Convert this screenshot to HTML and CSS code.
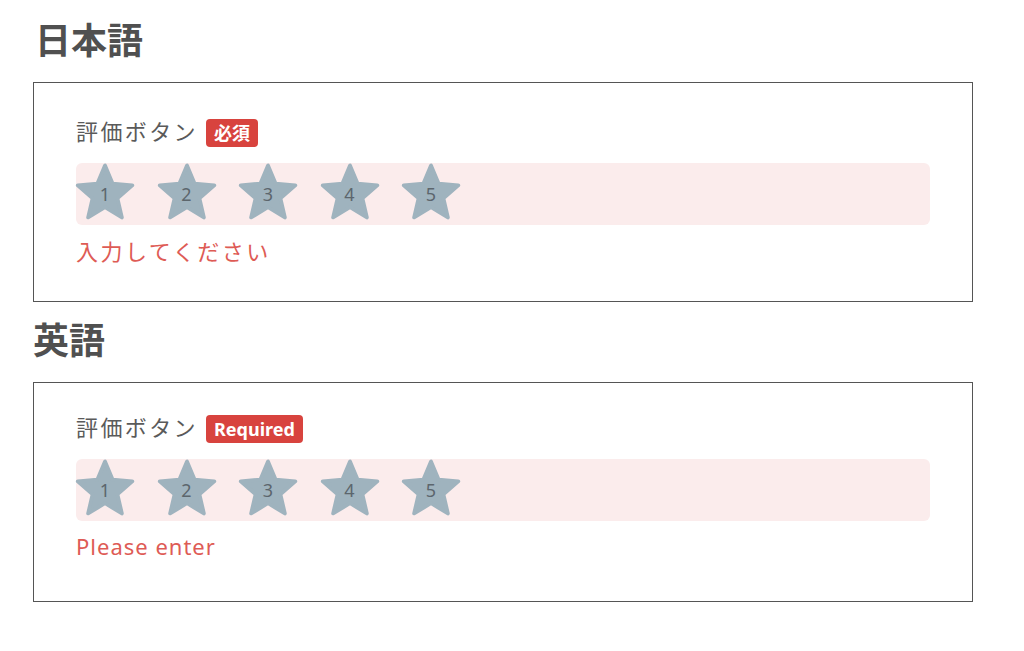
FILE: index.html
```html
<!DOCTYPE html>
<html lang="ja">

<head>
    <meta charset="UTF-8">
    <meta name="viewport" content="width=device-width, initial-scale=1.0">
    <title>評価ボタン</title>
    <link rel="stylesheet" href="styles.css">
</head>

<body>
    <div class="page">
        <h1 class="lang-title">日本語</h1>
        <div class="panel">
            <div class="field-label">
                <span class="label-text">評価ボタン</span>
                <span class="badge">必須</span>
            </div>
            <div class="rating">
                <div class="star"><svg viewBox="1 1.2 22 20.6"><path d="M12 17.27L18.18 21l-1.64-7.03L22 9.24l-7.19-.61L12 2 9.19 8.63 2 9.24l5.46 4.73L5.82 21z"/></svg><span class="num">1</span></div>
                <div class="star"><svg viewBox="1 1.2 22 20.6"><path d="M12 17.27L18.18 21l-1.64-7.03L22 9.24l-7.19-.61L12 2 9.19 8.63 2 9.24l5.46 4.73L5.82 21z"/></svg><span class="num">2</span></div>
                <div class="star"><svg viewBox="1 1.2 22 20.6"><path d="M12 17.27L18.18 21l-1.64-7.03L22 9.24l-7.19-.61L12 2 9.19 8.63 2 9.24l5.46 4.73L5.82 21z"/></svg><span class="num">3</span></div>
                <div class="star"><svg viewBox="1 1.2 22 20.6"><path d="M12 17.27L18.18 21l-1.64-7.03L22 9.24l-7.19-.61L12 2 9.19 8.63 2 9.24l5.46 4.73L5.82 21z"/></svg><span class="num">4</span></div>
                <div class="star"><svg viewBox="1 1.2 22 20.6"><path d="M12 17.27L18.18 21l-1.64-7.03L22 9.24l-7.19-.61L12 2 9.19 8.63 2 9.24l5.46 4.73L5.82 21z"/></svg><span class="num">5</span></div>
            </div>
            <div class="error">入力してください</div>
        </div>

        <h1 class="lang-title second">英語</h1>
        <div class="panel en">
            <div class="field-label">
                <span class="label-text">評価ボタン</span>
                <span class="badge">Required</span>
            </div>
            <div class="rating">
                <div class="star"><svg viewBox="1 1.2 22 20.6"><path d="M12 17.27L18.18 21l-1.64-7.03L22 9.24l-7.19-.61L12 2 9.19 8.63 2 9.24l5.46 4.73L5.82 21z"/></svg><span class="num">1</span></div>
                <div class="star"><svg viewBox="1 1.2 22 20.6"><path d="M12 17.27L18.18 21l-1.64-7.03L22 9.24l-7.19-.61L12 2 9.19 8.63 2 9.24l5.46 4.73L5.82 21z"/></svg><span class="num">2</span></div>
                <div class="star"><svg viewBox="1 1.2 22 20.6"><path d="M12 17.27L18.18 21l-1.64-7.03L22 9.24l-7.19-.61L12 2 9.19 8.63 2 9.24l5.46 4.73L5.82 21z"/></svg><span class="num">3</span></div>
                <div class="star"><svg viewBox="1 1.2 22 20.6"><path d="M12 17.27L18.18 21l-1.64-7.03L22 9.24l-7.19-.61L12 2 9.19 8.63 2 9.24l5.46 4.73L5.82 21z"/></svg><span class="num">4</span></div>
                <div class="star"><svg viewBox="1 1.2 22 20.6"><path d="M12 17.27L18.18 21l-1.64-7.03L22 9.24l-7.19-.61L12 2 9.19 8.63 2 9.24l5.46 4.73L5.82 21z"/></svg><span class="num">5</span></div>
            </div>
            <div class="error">Please enter</div>
        </div>
    </div>
</body>

</html>
```

FILE: styles.css
```css
* {
    margin: 0;
    padding: 0;
    box-sizing: border-box
}

body {
    font-family: "Noto Sans", "Noto Sans CJK JP", sans-serif;
    color: #555;
    background: #fff
}

.page {
    width: 940px;
    margin-left: 33px;
    padding-top: 20px
}

.lang-title {
    font-size: 36px;
    font-weight: 700;
    line-height: 42px;
    color: #505050;
    margin-bottom: 20px;
    padding-left: 2px
}

.lang-title.second {
    margin-top: 18px;
    padding-left: 0
}

.panel {
    border: 1px solid #555;
    padding: 32px 42px 35px
}

.field-label {
    display: flex;
    align-items: center;
    gap: 8px;
    height: 30px
}

.label-text {
    font-size: 22px;
    letter-spacing: 2.4px;
    color: #5a5a5a
}

.badge {
    background: #d8433e;
    color: #fff;
    font-weight: 700;
    font-size: 18px;
    line-height: 28px;
    padding: 0 8px;
    border-radius: 4px;
    margin-top: 6px
}

.rating {
    margin-top: 18px;
    height: 62px;
    background: #fbecec;
    border-radius: 6px;
    display: flex;
    gap: 22.5px;
    align-items: flex-start
}

.star {
    display: grid;
    width: 60px;
    height: 57px;
    margin-left: -1px
}

.star svg,
.star .num {
    grid-area: 1 / 1
}

.star svg {
    width: 60px;
    height: 57px;
    fill: #9fb3be;
    stroke: #9fb3be;
    stroke-width: 1.4;
    stroke-linejoin: round
}

.star .num {
    font-size: 18px;
    color: #5c666d;
    text-align: center;
    padding-top: 19px
}

.error {
    margin-top: 11px;
    font-size: 22px;
    line-height: 30px;
    letter-spacing: 2.5px;
    color: #de5b55
}

/* 英語パネルは行の高さが少し違う */
.panel.en {
    padding-top: 28px;
    padding-bottom: 40px
}

.panel.en .badge {
    margin-top: 5px
}

.panel.en .error {
    margin-top: 10px;
    letter-spacing: 1px
}
```
